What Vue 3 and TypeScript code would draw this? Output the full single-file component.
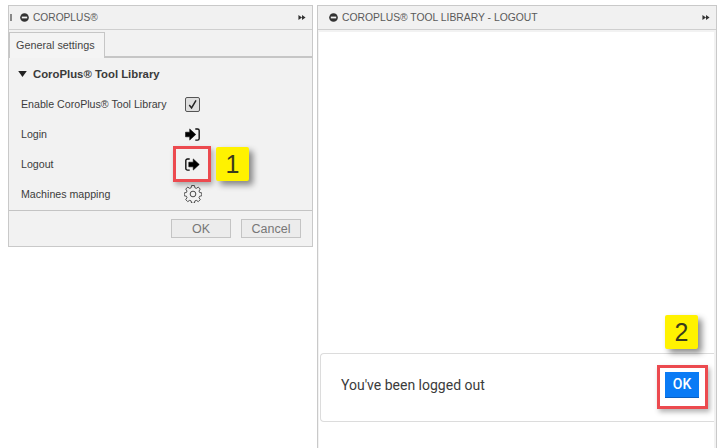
<script setup lang="ts">
const title = 'COROPLUS® TOOL LIBRARY - LOGOUT'
</script>

<template>
  <div class="page">
    <section class="panel left">
      <header class="head">
        <span class="grip"></span>
        <svg class="minus" viewBox="0 0 10 10"><circle cx="5" cy="5" r="4.800" fill="#333" /><rect x="2" y="4" width="6" height="2" fill="#f2f2f2" /></svg>
        <span class="title">COROPLUS®</span>
        <svg class="ff" viewBox="0 0 10 7"><path d="M0 0l5 3.500L0 7zM5 0l5 3.500L5 7z" fill="#333" /></svg>
      </header>
      <div class="tabs"><div class="tab">General settings</div></div>
      <div class="body">
        <div class="group"><svg class="tri" viewBox="0 0 10 7"><path d="M0 0h10L5 7z" fill="#222" /></svg>CoroPlus® Tool Library</div>
        <div class="row">
          <span class="label">Enable CoroPlus® Tool Library</span>
          <span class="check"><svg viewBox="0 0 14 14"><path d="M3.500 7.500l2.500 3.200L10.800 2.500" fill="none" stroke="#222" stroke-width="1.600" /></svg></span>
        </div>
        <div class="row">
          <span class="label">Login</span>
          <svg class="ico" viewBox="0 0 16 14"><path d="M0.500 4.500h4.500V1L11.500 7 5 13V9.500H0.500z" fill="#000" stroke="#000" stroke-width=".6" stroke-linejoin="round" /><path d="M11 1h2.400A1.800 1.800 0 0 1 15.200 2.800v8.400A1.800 1.800 0 0 1 13.400 13H11" fill="none" stroke="#111" stroke-width="1.500" /></svg>
        </div>
        <div class="row">
          <span class="label">Logout</span>
          <svg class="ico" viewBox="0 0 16 14"><path d="M5 1H2.600A1.800 1.800 0 0 0 .800 2.800v8.400A1.800 1.800 0 0 0 2.600 13H5" fill="none" stroke="#111" stroke-width="1.500" /><path d="M4 4.500h4.800V1L15.300 7 8.800 13V9.500H4z" fill="#000" stroke="#000" stroke-width=".6" stroke-linejoin="round" /></svg>
        </div>
        <div class="row">
          <span class="label">Machines mapping</span>
          <svg class="gear" viewBox="0 0 24 24"><path d="M10 1.500h4l.7 3.200 2 .8 2.800-1.800 2.800 2.800-1.800 2.800.8 2 3.200.7v4l-3.200.7-.8 2 1.800 2.800-2.800 2.800-2.800-1.800-2 .8-.7 3.200h-4l-.7-3.200-2-.8-2.800 1.800-2.800-2.800 1.800-2.800-.8-2-3.200-.7v-4l3.200-.7.8-2-1.800-2.800 2.800-2.800 2.800 1.800 2-.8z" transform="translate(12 12) scale(.94) translate(-12 -13.500)" fill="none" stroke="#333" stroke-width="1.200" stroke-linejoin="round" /><circle cx="12" cy="12" r="3.800" fill="none" stroke="#333" stroke-width="1.200" /></svg>
        </div>
      </div>
      <footer class="foot">
        <button class="btn ok">OK</button>
        <button class="btn">Cancel</button>
      </footer>
    </section>

    <section class="panel right">
      <header class="head">
        <svg class="minus" viewBox="0 0 10 10"><circle cx="5" cy="5" r="4.800" fill="#333" /><rect x="2" y="4" width="6" height="2" fill="#f2f2f2" /></svg>
        <span class="title">{{ title }}</span>
        <svg class="ff" viewBox="0 0 10 7"><path d="M0 0l5 3.500L0 7zM5 0l5 3.500L5 7z" fill="#333" /></svg>
      </header>
      <div class="content">
        <div class="card">
          <span class="msg">You've been logged out</span>
          <button class="primary">OK</button>
        </div>
      </div>
    </section>

    <div class="mark m1"></div>
    <div class="note n1">1</div>
    <div class="mark m2"></div>
    <div class="note n2">2</div>
  </div>
</template>

<style>
html, body { margin: 0; background: #fff; }
</style>

<style scoped>
.page {
  position: relative;
  width: 721px;
  height: 448px;
  overflow: hidden;
  display: flex;
  align-items: flex-start;
  gap: 4px;
  padding: 5px 0 0 8px;
  box-sizing: border-box;
  background: #fff;
  font-family: "Liberation Sans", Arial, sans-serif;
}
.panel { box-sizing: border-box; border: 1px solid #c9c9c9; background: #f2f2f2; display: flex; flex-direction: column; }
.left { width: 305px; height: 242px; }
.right { width: 400px; height: 460px; }
.head { height: 23px; flex: none; display: flex; align-items: center; border-bottom: 1px solid #cfcfcf; background: #f1f1f1; }
.left .head { padding-left: 1px; }
.right .head { padding-left: 11px; }
.grip { width: 0; height: 7px; border-left: 1px solid #888; border-right: 1px solid #888; margin-right: 8px; }
.minus { width: 9px; height: 9px; flex: none; margin-right: 4px; }
.title { font-size: 10.200px; color: #5a5a5a; white-space: nowrap; }
.right .title { font-size: 10.350px; }
.ff { width: 10px; height: 5px; margin-left: auto; margin-right: 5px; flex: none; }
.tabs { height: 28px; flex: none; display: flex; align-items: flex-end; border-bottom: 2px solid #c6c6c6; box-sizing: border-box; }
.tab { height: 26px; margin-bottom: -2px; width: 96px; box-sizing: border-box; border: 1px solid #c6c6c6; border-bottom: 0; background: #f4f4f4; font-size: 10.800px; color: #444; padding: 6px 0 0 6px; }
.body { flex: 1; padding: 0 0 0 12px; }
.group { height: 31px; margin-left: -3px; display: flex; align-items: center; font-size: 11.350px; font-weight: 700; color: #3a3a3a; }
.tri { width: 9px; height: 6px; margin-right: 6px; }
.row { height: 30px; display: flex; align-items: center; }
.label { width: 164px; font-size: 10.650px; color: #3c3c3c; white-space: nowrap; }
.check { width: 13px; height: 13px; border: 1px solid #555; border-radius: 2px; background: #dedede; display: block; }
.check svg { display: block; width: 13px; height: 13px; }
.ico { width: 15px; height: 13px; }
.gear { width: 18px; height: 18px; margin-left: -1px; }
.foot { height: 36px; flex: none; border-top: 1px solid #c4c4c4; display: flex; justify-content: flex-end; align-items: center; gap: 10px; padding-right: 11px; box-sizing: border-box; }
.btn { width: 60px; height: 19px; padding: 0; border: 1px solid #c4c4c4; background: #ececec; font: 12.500px "Liberation Sans", Arial, sans-serif; color: #777; }
.content { flex: 1; background: #fff; margin: 2px 2px 0 1px; padding-top: 321px; }
.card { box-sizing: border-box; height: 69px; margin-left: 1px; border: 1px solid #dcdcdc; border-right: 0; border-radius: 4px 0 0 4px; display: flex; align-items: center; justify-content: space-between; padding: 0 15px 6px 20px; background: #fff; }
.msg { font: 14px Roboto, sans-serif; color: #3b3b3b; }
.primary { width: 34px; height: 26px; padding: 0; border: 0; background: #0a7bf5; border-bottom: 1px solid #0b5fc0; color: #fff; font: 500 14px Roboto, sans-serif; }
.mark { position: absolute; box-sizing: border-box; border: 3px solid #ec4a4f; box-shadow: 2px 3px 5px rgba(0,0,0,.3); }
.m1 { left: 173px; top: 146px; width: 38px; height: 36px; }
.m2 { left: 657px; top: 365px; width: 51px; height: 44px; }
.note { position: absolute; width: 33px; height: 34px; display: flex; align-items: center; justify-content: center; background: #fff200; border-radius: 2px; color: #3a3a1e; font-size: 25px; box-shadow: 4px 4px 6px rgba(0,0,0,.45); }
.n1 { left: 216px; top: 147px; }
.n2 { left: 665px; top: 315px; }
</style>
